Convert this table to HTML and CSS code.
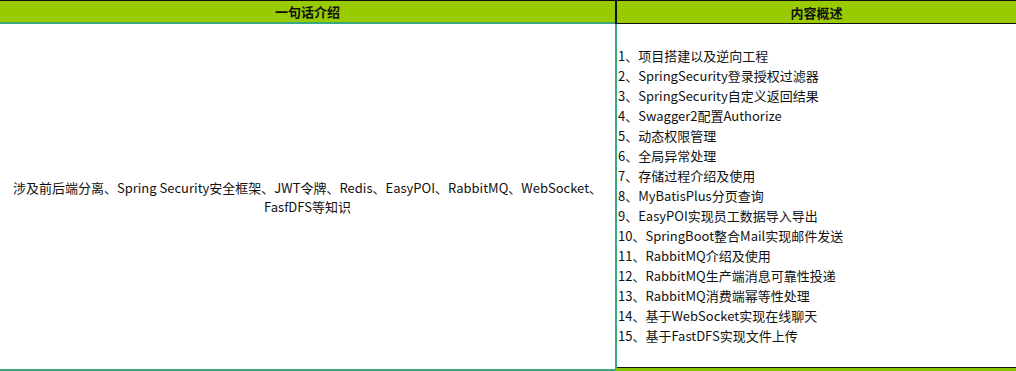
FILE: index.html
```html
<!DOCTYPE html>
<html lang="zh">
<head>
<meta charset="utf-8">
<link rel="stylesheet" href="styles.css">
</head>
<body>
<div class="sheet">
  <div class="row head">
    <div class="cell head-left">一句话介绍</div>
    <div class="cell head-right">内容概述</div>
  </div>
  <div class="row body-row">
    <div class="cell body-left">
      <p>涉及前后端分离、Spring Security安全框架、JWT令牌、Redis、EasyPOI、RabbitMQ、WebSocket、<br>FasfDFS等知识</p>
    </div>
    <div class="cell body-right">
      <ul class="list">
        <li>1、项目搭建以及逆向工程</li>
        <li>2、SpringSecurity登录授权过滤器</li>
        <li>3、SpringSecurity自定义返回结果</li>
        <li>4、Swagger2配置Authorize</li>
        <li>5、动态权限管理</li>
        <li>6、全局异常处理</li>
        <li>7、存储过程介绍及使用</li>
        <li>8、MyBatisPlus分页查询</li>
        <li>9、EasyPOI实现员工数据导入导出</li>
        <li>10、SpringBoot整合Mail实现邮件发送</li>
        <li>11、RabbitMQ介绍及使用</li>
        <li>12、RabbitMQ生产端消息可靠性投递</li>
        <li>13、RabbitMQ消费端幂等性处理</li>
        <li>14、基于WebSocket实现在线聊天</li>
        <li>15、基于FastDFS实现文件上传</li>
      </ul>
    </div>
  </div>
</div>
</body>
</html>
```
FILE: styles.css
```css
html, body {
  margin: 0;
  padding: 0;
  background: #ffffff;
}
.sheet {
  width: 1016px;
  height: 371px;
  border-top: 1px solid #111;
  box-sizing: border-box;
  font-family: "Noto Sans CJK SC", "Open Sans", sans-serif;
  font-size: 13px;
  color: #111;
}
.row {
  display: grid;
  grid-template-columns: 615px 1fr;
}
.head {
  height: 23px;
  background: #99cc00;
  font-weight: bold;
}
.cell {
  box-sizing: border-box;
}
.head-left {
  display: flex;
  align-items: center;
  justify-content: center;
  border-bottom: 2px solid #3aa87a;
}
.head-right {
  display: flex;
  align-items: center;
  justify-content: center;
  border-left: 2px solid #111;
  border-bottom: 1px solid #111;
}
.body-row {
  height: 347px;
}
.body-left {
  display: flex;
  align-items: center;
  justify-content: center;
  text-align: center;
  border-bottom: 2px solid #3aa87a;
}
.body-left p {
  margin: 0;
  line-height: 19px;
}
.body-right {
  display: flex;
  align-items: center;
  border-left: 2px solid #3aa87a;
  border-bottom: 3px solid #88c400;
  box-shadow: inset 0 -4px 0 -3px #111;
  padding-left: 1px;
}
.list {
  list-style: none;
  margin: 0;
  padding: 0;
  line-height: 20px;
}
.list li {
  white-space: nowrap;
}
```
